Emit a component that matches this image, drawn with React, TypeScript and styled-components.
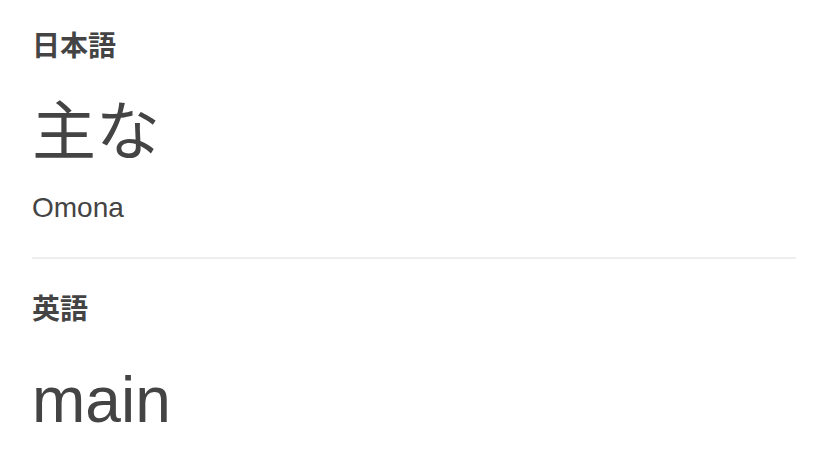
import styled, { createGlobalStyle } from 'styled-components';

const GlobalStyle = createGlobalStyle`
  body {
    margin: 0;
    background: #ffffff;
    font-family: "Liberation Sans", "Noto Sans CJK JP", sans-serif;
    color: #444444;
  }
`;

const entries = [
    { lang: '日本語', word: '主な', reading: 'Omona', latin: false },
    { lang: '英語', word: 'main', latin: true },
];

export default function App() {
    return (
        <>
            <GlobalStyle />
            <Page>
                {entries.map((entry, i) => (
                    <div key={entry.lang}>
                        {i > 0 && <Divider />}
                        <Section>
                            <Label>{entry.lang}</Label>
                            <Word $latin={entry.latin}>{entry.word}</Word>
                            {entry.reading && <Reading>{entry.reading}</Reading>}
                        </Section>
                    </div>
                ))}
            </Page>
        </>
    );
}

const Page = styled.div`
    padding: 0 32px;
`;

const Section = styled.section`
    display: flex;
    flex-direction: column;
    padding: 30px 0 34px;
`;

const Divider = styled.hr`
    border: none;
    border-top: 2px solid #eeeeee;
    margin: 0 0 4px;
`;

const Label = styled.div`
    font-family: "Noto Sans CJK JP", sans-serif;
    font-size: 28px;
    font-weight: 700;
    line-height: 28px;
`;

const Word = styled.div<{ $latin: boolean }>`
    font-size: 64px;
    line-height: 72px;
    margin-top: ${p => (p.$latin ? '43px' : '38px')};
`;

const Reading = styled.div`
    font-size: 28px;
    line-height: 30px;
    margin-top: 25px;
`;
